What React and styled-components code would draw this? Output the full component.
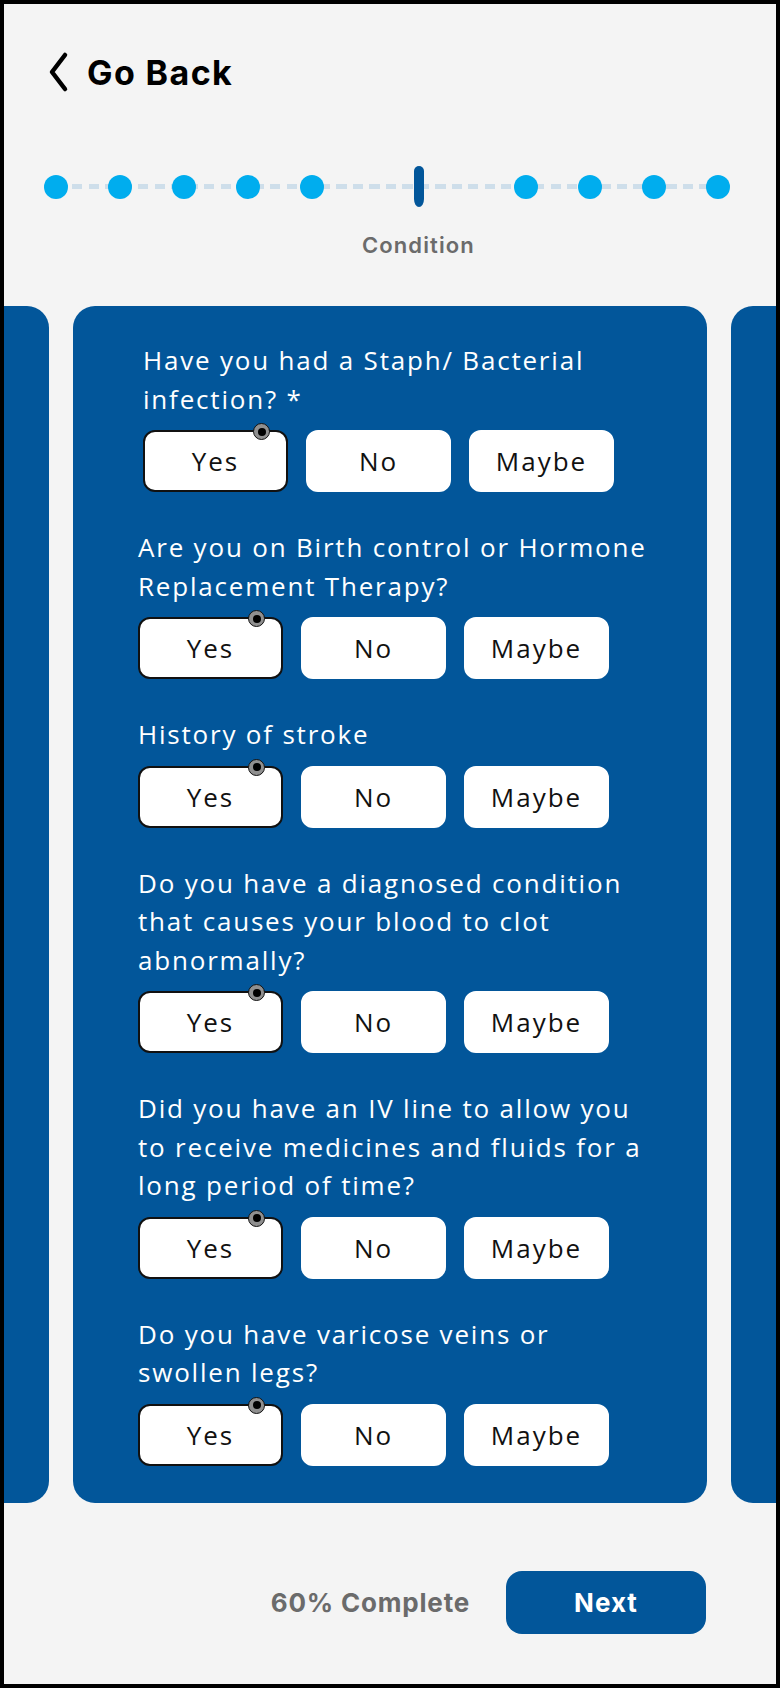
import styled, { createGlobalStyle } from "styled-components";

const questions = [
  { lines: ["Have you had a Staph/ Bacterial", "infection? *"], indent: 5 },
  { lines: ["Are you on Birth control or Hormone", "Replacement Therapy?"] },
  { lines: ["History of stroke"] },
  {
    lines: [
      "Do you have a diagnosed condition",
      "that causes your blood to clot",
      "abnormally?",
    ],
  },
  {
    lines: [
      "Did you have an IV line to allow you",
      "to receive medicines and fluids for a",
      "long period of time?",
    ],
  },
  { lines: ["Do you have varicose veins or", "swollen legs?"] },
];

const steps = ["done", "done", "done", "done", "done", "current", "todo", "todo", "todo", "todo"];

function App() {
  return (
    <>
      <GlobalStyle />
      <Frame>
        <Header>
          <svg width="22" height="42" viewBox="0 0 22 42">
            <polyline
              points="17,4 4,21 17,38"
              fill="none"
              stroke="#000"
              strokeWidth="4.5"
              strokeLinecap="round"
              strokeLinejoin="round"
            />
          </svg>
          <BackLabel>Go Back</BackLabel>
        </Header>

        <Stepper>
          {steps.map((s, i) =>
            s === "current" ? <CurrentStep key={i} /> : <Dot key={i} />
          )}
        </Stepper>
        <StepLabel>Condition</StepLabel>

        <Carousel>
          <Card />
          <Card>
            {questions.map((q, i) => (
              <Question key={i} $indent={q.indent || 0}>
                <QuestionText>
                  {q.lines.map((l, j) => (
                    <span key={j}>
                      {l}
                      {j < q.lines.length - 1 && <br />}
                    </span>
                  ))}
                </QuestionText>
                <Options>
                  <Option $selected>
                    Yes
                    <Marker />
                  </Option>
                  <Option>No</Option>
                  <Option>Maybe</Option>
                </Options>
              </Question>
            ))}
          </Card>
          <Card />
        </Carousel>

        <Footer>
          <Progress>60% Complete</Progress>
          <NextButton>Next</NextButton>
        </Footer>
      </Frame>
    </>
  );
}

export default App;

const GlobalStyle = createGlobalStyle`
  html, body {
    margin: 0;
    padding: 0;
    background: #000;
  }
  * {
    box-sizing: border-box;
  }
`;

const Frame = styled.div`
  width: 780px;
  height: 1688px;
  border: 4px solid #000;
  background: #f4f4f4;
  display: flex;
  flex-direction: column;
  overflow: hidden;
  font-family: "Open Sans", "Liberation Sans", sans-serif;
`;

const Header = styled.div`
  display: flex;
  align-items: center;
  gap: 17px;
  height: 42px;
  margin-top: 47px;
  padding-left: 44px;
`;

const BackLabel = styled.span`
  font-family: Inter, "Liberation Sans", sans-serif;
  font-weight: 700;
  font-size: 34px;
  color: #000;
  letter-spacing: 1.4px;
`;

const Stepper = styled.div`
  position: relative;
  display: flex;
  align-items: center;
  height: 41px;
  margin-top: 73px;
  padding-left: 40px;
  gap: 40px;

  &::before {
    content: "";
    position: absolute;
    left: 52px;
    width: 662px;
    top: 18px;
    height: 5px;
    background: repeating-linear-gradient(
      to right,
      #cedeea 0 10px,
      transparent 10px 16.5px
    );
    z-index: 0;
  }
`;

const Dot = styled.span`
  position: relative;
  z-index: 1;
  width: 24px;
  height: 24px;
  border-radius: 50%;
  background: #00adee;
  flex-shrink: 0;
`;

const CurrentStep = styled.span`
  position: relative;
  z-index: 1;
  width: 10px;
  height: 41px;
  margin: 0 50px;
  border-radius: 5px 5px 5px 5px / 5px 5px 8px 8px;
  background: #02569a;
  flex-shrink: 0;
`;

const StepLabel = styled.div`
  margin-top: 25px;
  padding-left: 358px;
  font-family: Inter, "Liberation Sans", sans-serif;
  font-weight: 600;
  font-size: 22px;
  line-height: 26px;
  letter-spacing: 1.1px;
  color: #6b6b6b;
`;

const Carousel = styled.div`
  display: flex;
  justify-content: center;
  gap: 24px;
  margin-top: 48px;
`;

const Card = styled.div`
  flex-shrink: 0;
  width: 634px;
  background: #02569a;
  border-radius: 22px;
  padding: 35px 65px 37px;
  display: flex;
  flex-direction: column;
  gap: 36px;
`;

const Question = styled.div`
  padding-left: ${(p) => p.$indent}px;
`;

const QuestionText = styled.div`
  color: #fff;
  font-size: 26px;
  line-height: 38.5px;
  letter-spacing: 1.8px;
  white-space: nowrap;
  margin-bottom: 12px;
`;

const Options = styled.div`
  display: flex;
  gap: 18px;
`;

const Option = styled.div`
  position: relative;
  width: 145px;
  height: 62px;
  display: flex;
  align-items: center;
  justify-content: center;
  background: #fff;
  border-radius: 12px;
  border: 2px solid ${(p) => (p.$selected ? "#111" : "#fff")};
  font-size: 26px;
  letter-spacing: 2px;
  color: #111;
`;

const Marker = styled.span`
  position: absolute;
  top: -9px;
  right: 16px;
  width: 17px;
  height: 17px;
  border-radius: 50%;
  background: #8f8f8f;
  border: 1.5px solid #111;
  display: flex;
  align-items: center;
  justify-content: center;

  &::after {
    content: "";
    width: 8px;
    height: 8px;
    border-radius: 50%;
    background: #000;
  }
`;

const Footer = styled.div`
  display: flex;
  justify-content: flex-end;
  align-items: center;
  gap: 36px;
  margin-top: 68px;
  padding-right: 70px;
`;

const Progress = styled.span`
  font-family: Inter, "Liberation Sans", sans-serif;
  font-weight: 700;
  font-size: 26px;
  letter-spacing: 0.8px;
  color: #6b6b6b;
`;

const NextButton = styled.button`
  width: 200px;
  height: 63px;
  border: none;
  border-radius: 16px;
  background: #02569a;
  color: #fff;
  font-family: Inter, "Liberation Sans", sans-serif;
  font-weight: 700;
  font-size: 26px;
  letter-spacing: 1px;
  cursor: pointer;
`;
